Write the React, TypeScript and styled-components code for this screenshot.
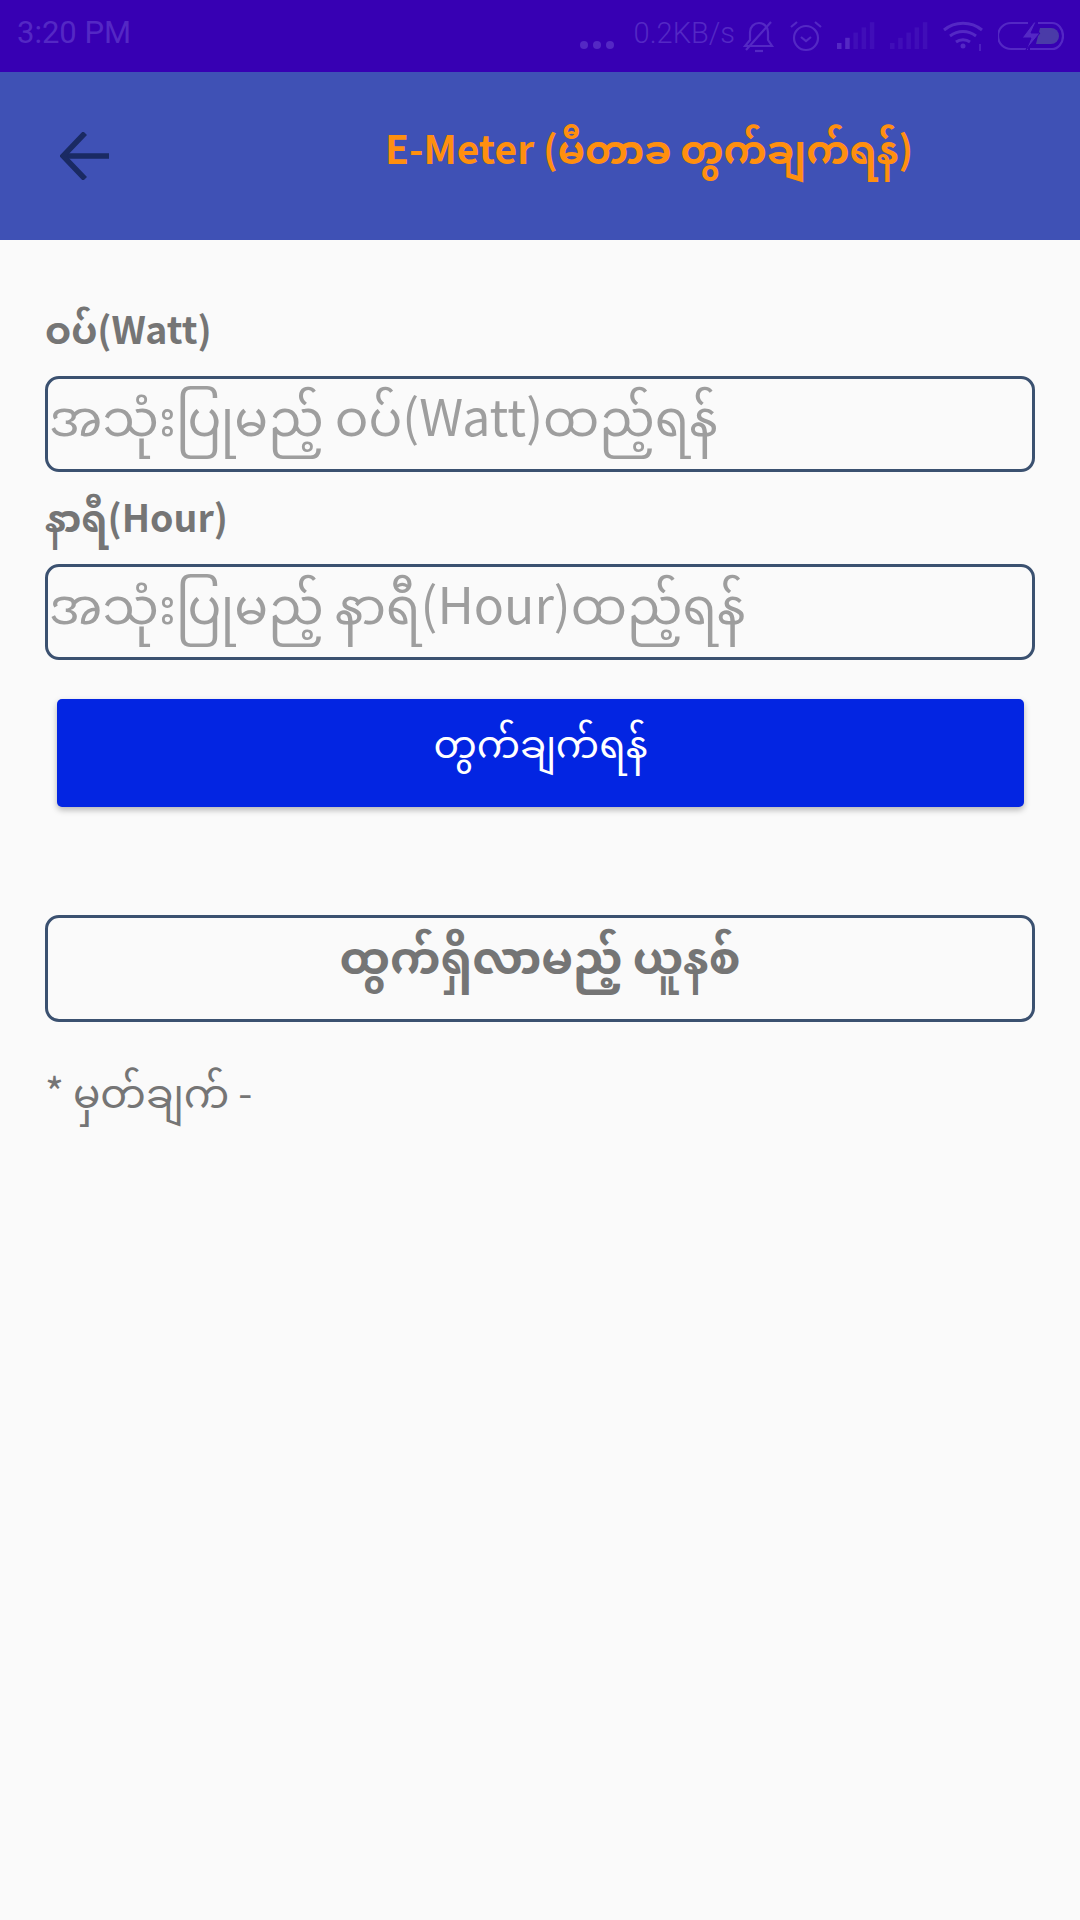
import React from "react";
import styled, { createGlobalStyle } from "styled-components";

const MM = `"Noto Sans CJK SC", "Noto Sans Myanmar", sans-serif`;
const FAINT = "#5428c4";

const Global = createGlobalStyle`
  html, body {
    margin: 0;
    padding: 0;
    background: #fafafa;
  }
  * {
    box-sizing: border-box;
  }
`;

function BellOff() {
  return (
    <svg width="32" height="34" viewBox="0 0 32 34" fill="none" stroke={FAINT} strokeWidth="2.2">
      <path d="M2 27h27l-4-6v-8a9 9 0 0 0-18 0v8z" />
      <path d="M28 3L3 31" />
      <path d="M12 32h8" />
    </svg>
  );
}

function Alarm() {
  return (
    <svg width="32" height="34" viewBox="0 0 32 34" fill="none" stroke={FAINT} strokeWidth="2.2">
      <circle cx="16" cy="19" r="12" />
      <path d="M11 18l5 4 5-4" />
      <path d="M1 8l6-5M31 8l-6-5" />
    </svg>
  );
}

function Signal({ active }: { active: number }) {
  const bars = [0, 1, 2, 3, 4];
  return (
    <svg width="38" height="28" viewBox="0 0 38 28">
      {bars.map((b) => (
        <rect
          key={b}
          x={b * 8.2}
          y={21 - b * 5.2}
          width="4.5"
          height={6 + b * 5.2}
          fill={FAINT}
          opacity={b < active ? 1 : 0.35}
        />
      ))}
    </svg>
  );
}

function Wifi() {
  return (
    <svg width="40" height="30" viewBox="0 0 40 30" fill="none" stroke={FAINT} strokeWidth="3">
      <path d="M1 9c11-9 27-9 38 0" />
      <path d="M7 15c8-6 18-6 26 0" />
      <path d="M13 21c4-3 10-3 14 0" />
      <circle cx="20" cy="25" r="2.5" fill={FAINT} stroke="none" />
      <path d="M37 23v7" strokeWidth="1.5" />
    </svg>
  );
}

function Battery() {
  return (
    <svg width="66" height="30" viewBox="0 0 66 30" fill="none" stroke={FAINT} strokeWidth="2.2">
      <path d="M30 2H13a12 12 0 0 0 0 26h17" />
      <path d="M40 2h14a11 13 0 0 1 0 26H32" />
      <path d="M42 7h11a8 8 0 0 1 0 16H38z" fill="#4a3ba8" stroke="none" />
      <path d="M36 1L24 17h9l-5 12 14-17h-9l5-11z" fill={FAINT} stroke="#3700b3" strokeWidth="1" />
    </svg>
  );
}

function BackArrow() {
  return (
    <svg width="50" height="48" viewBox="0 0 50 48" fill="none" stroke="#1a2a63" strokeWidth="5.5">
      <path d="M2 24h47" />
      <path d="M25 1L3 24l22 23" />
    </svg>
  );
}

export default function App() {
  return (
    <Page>
      <Global />
      <StatusBar>
        <Clock>3:20 PM</Clock>
        <StatusRight>
          <Dots>
            <i />
            <i />
            <i />
          </Dots>
          <Speed>0.2KB/s</Speed>
          <BellOff />
          <Alarm />
          <Signal active={2} />
          <Signal active={0} />
          <Wifi />
          <Battery />
        </StatusRight>
      </StatusBar>
      <Toolbar>
        <BackButton>
          <BackArrow />
        </BackButton>
        <Title>E-Meter (မီတာခ တွက်ချက်ရန်)</Title>
      </Toolbar>
      <Content>
        <Label>ဝပ်(Watt)</Label>
        <Field placeholder="အသုံးပြုမည့် ဝပ်(Watt)ထည့်ရန်" />
        <Label>နာရီ(Hour)</Label>
        <Field placeholder="အသုံးပြုမည့် နာရီ(Hour)ထည့်ရန်" />
        <CalcButton>တွက်ချက်ရန်</CalcButton>
        <Result>ထွက်ရှိလာမည့် ယူနစ်</Result>
        <Note>* မှတ်ချက် -</Note>
      </Content>
    </Page>
  );
}

const Page = styled.div`
  width: 1080px;
  height: 1920px;
  background: #fafafa;
  overflow: hidden;
  font-family: ${MM};
`;

const StatusBar = styled.div`
  height: 72px;
  background: #3700b3;
  display: flex;
  align-items: center;
  justify-content: space-between;
  padding: 0 16px 0 17px;
`;

const Clock = styled.span`
  font-family: Roboto, sans-serif;
  font-size: 31px;
  color: ${FAINT};
  margin-top: -8px;
`;

const StatusRight = styled.div`
  display: flex;
  align-items: center;
  gap: 15px;
  margin-top: 0;
`;

const Dots = styled.div`
  display: flex;
  gap: 5px;
  margin: 18px 5px 0 0;

  i {
    width: 8px;
    height: 8px;
    border-radius: 50%;
    background: ${FAINT};
  }
`;

const Speed = styled.span`
  font-family: Roboto, sans-serif;
  font-size: 29px;
  font-weight: 300;
  color: ${FAINT};
  margin: -6px -7px 0 0;
`;

const Toolbar = styled.div`
  height: 168px;
  background: #3f51b5;
  display: flex;
  align-items: center;
`;

const BackButton = styled.div`
  width: 60px;
  height: 48px;
  margin-left: 60px;
  flex-shrink: 0;
`;

const Title = styled.div`
  margin-left: 265px;
  margin-top: -2px;
  font-size: 39px;
  font-weight: 700;
  color: #ff8f0f;
  white-space: nowrap;
`;

const Content = styled.div`
  padding: 63px 45px 0 45px;
`;

const Label = styled.div`
  height: 73px;
  font-size: 37.5px;
  line-height: 50px;
  font-weight: 700;
  color: #757575;
`;

const Field = styled.input`
  display: block;
  width: 100%;
  height: 96px;
  margin-bottom: 19px;
  padding: 0 0 20px 1px;
  background: transparent;
  border: 3px solid #3b5170;
  border-radius: 14px;
  outline: none;
  font-family: ${MM};
  font-size: 50px;

  &::placeholder {
    color: #9e9e9e;
    opacity: 1;
  }
`;

const CalcButton = styled.button`
  display: block;
  width: 967px;
  height: 108px;
  margin: 39px 0 0 12px;
  padding: 0 0 8px;
  background: #0325e2;
  border: none;
  border-radius: 5px;
  box-shadow: 0 3px 6px rgba(0, 0, 0, 0.28);
  color: #ffffff;
  font-family: ${MM};
  font-size: 38.5px;
`;

const Result = styled.div`
  height: 107px;
  margin-top: 108px;
  padding-bottom: 10px;
  display: flex;
  align-items: center;
  justify-content: center;
  border: 3px solid #3b5170;
  border-radius: 14px;
  font-size: 45.5px;
  font-weight: 700;
  color: #757575;
`;

const Note = styled.div`
  margin-top: 41px;
  font-size: 40.5px;
  line-height: 56px;
  color: #757575;
`;
